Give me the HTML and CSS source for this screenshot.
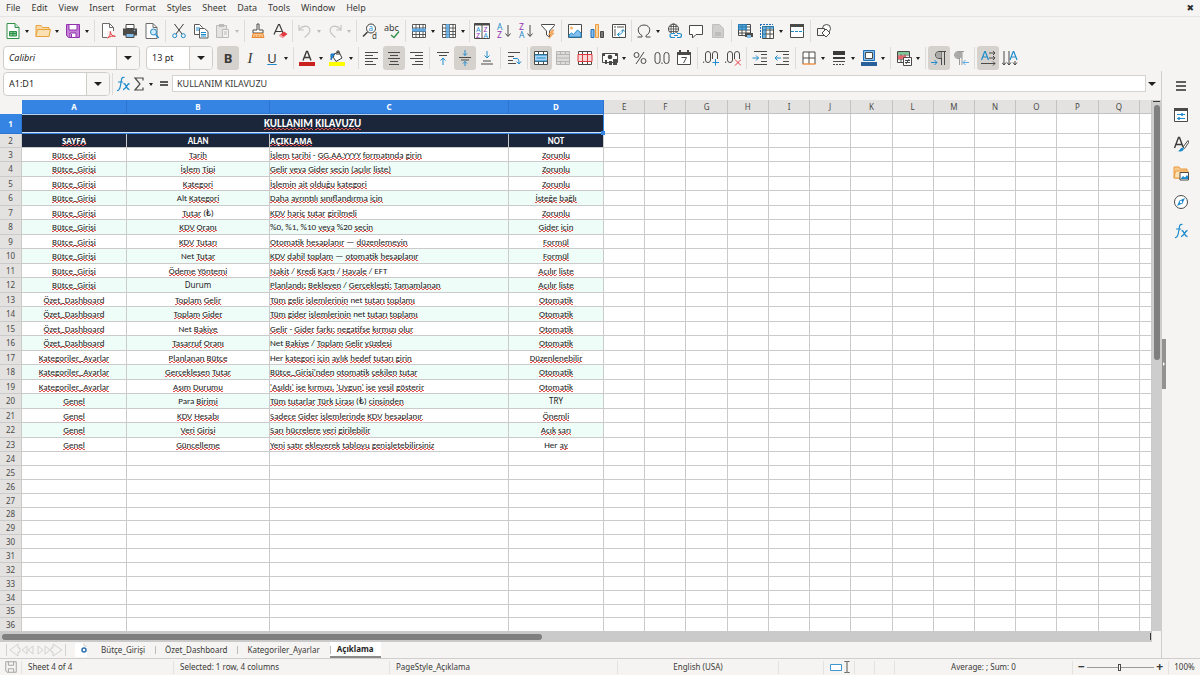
FILE: index.html
```html
<!DOCTYPE html>
<html lang="tr">
<head>
<meta charset="utf-8">
<title>Açıklama</title>
<link rel="stylesheet" href="styles.css">
</head>
<body>
<svg class="sprite" aria-hidden="true">
  <symbol id="new" viewBox="0 0 16 16"><path d="M2 .5h8l4 4v11H2z" fill="#fff" stroke="#309048"/><path d="M10 .5v4h4" fill="#c5e6cf" stroke="#309048"/><path d="M4.500 8.500h7v4.500h-7z" fill="#7dc795" stroke="#309048"/><path d="M8 8v5M4 10.500h8" stroke="#309048"/></symbol>
  <symbol id="open" viewBox="0 0 16 16"><path d="M1 13.500V2.500h5l1.500 2H14v9z" fill="#f8d9a8" stroke="#e8a33d"/><path d="M1 13.500l1.500-7h13l-1.500 7z" fill="#fbe0b4" stroke="#e8a33d"/></symbol>
  <symbol id="save" viewBox="0 0 16 16"><path d="M1.500 1.500h13v13h-11l-2-2z" fill="#c581d6" stroke="#9332b0"/><path d="M4 1.500h8v5.500H4z" fill="#fff" stroke="#9332b0"/><path d="M5 10h6v4.500H5z" fill="#fff" stroke="#9332b0"/><path d="M6.500 11v3" stroke="#9332b0"/></symbol>
  <symbol id="pdf" viewBox="0 0 16 16"><path d="M2.500.5h7l4 4v10h-11z" fill="#fff" stroke="#6b6b69"/><path d="M9.500.5v4h4" fill="none" stroke="#6b6b69"/><path d="M7 8h8v8H7z" fill="#f5f4f2"/><path d="M7.500 15c2.300-1.500 3-3.500 2.800-6.500 .5 3.500 2 4.500 5 4.800-2.500-.5-5 0-7.800 1.700z" fill="none" stroke="#e33b3f"/></symbol>
  <symbol id="print" viewBox="0 0 16 16"><path d="M4 1.500h8v4H4z" fill="#fff" stroke="#4a4a48"/><path d="M1 5.500h14v7H1z" fill="#4a4a48"/><path d="M4 10.500h8v4H4z" fill="#83beec" stroke="#4a4a48"/><circle cx="12.500" cy="7.500" r=".8" fill="#83beec"/></symbol>
  <symbol id="preview" viewBox="0 0 16 16"><path d="M2 .5h7l4 4v11H2z" fill="#fff" stroke="#6b6b69"/><path d="M9 .5v4h4" fill="none" stroke="#6b6b69"/><circle cx="9.500" cy="9" r="3" fill="#d5eafa" stroke="#1e8bcd"/><path d="M11.700 11.500l3 3.500" stroke="#1e8bcd" stroke-width="1.300"/></symbol>
  <symbol id="cut" viewBox="0 0 16 16"><path d="M3.500 1l7.500 10M12.500 1L5 11" fill="none" stroke="#3a3a38"/><circle cx="3.700" cy="12.700" r="2" fill="none" stroke="#1e8bcd"/><circle cx="12.300" cy="12.700" r="2" fill="none" stroke="#1e8bcd"/></symbol>
  <symbol id="copy" viewBox="0 0 16 16"><path d="M1.500 1.500h5l3 3v7h-8z" fill="#fff" stroke="#5a5a58"/><path d="M6.500 5.500h5l3.500 3v6.500H6.500z" fill="#fff" stroke="#5a5a58"/><path d="M3 5h4M3 7h3M8 9.500h5M8 11.500h5M8 13h5" stroke="#1e8bcd"/></symbol>
  <symbol id="paste" viewBox="0 0 16 16"><path d="M1.500 2.500h10v12h-10z" fill="#e4e3e1" stroke="#bcbbb9"/><path d="M4 1h5v3H4z" fill="#bcbbb9"/><path d="M7.500 6.500h6v8h-6z" fill="#f2f1ef" stroke="#bcbbb9"/><path d="M9 9h3M9 11h3" stroke="#bcbbb9"/></symbol>
  <symbol id="brush" viewBox="0 0 16 16"><path d="M7 1h2v6h4v3H3V7h4z" fill="#fff" stroke="#4a4a48"/><path d="M3 10.500h10l1 4H2z" fill="#f8c98d" stroke="#ed8733"/><path d="M5 14v-2M8 14v-2M11 14v-2" stroke="#ed8733"/></symbol>
  <symbol id="clear" viewBox="0 0 16 16"><path d="M2 11.500L6.500 1.500h1L11 10M3.500 8.500h6" fill="none" stroke="#3a3a38" stroke-width="1.200"/><path d="M7 12.500l5-4 3.500 2.500-5 4z" fill="#e33b3f"/><path d="M7 12.500l1.500-1 3.500 2.500-1.500 1z" fill="#f9a6a8"/></symbol>
  <symbol id="undo" viewBox="0 0 16 16"><path d="M2 2v5h5M2.500 6.500c3-4 8.500-4.500 10-1 1.500 3.500-1.500 6-5 9" fill="none" stroke="#c4c3c1" stroke-width="1.200"/></symbol>
  <symbol id="redo" viewBox="0 0 16 16"><path d="M14 2v5H9M13.500 6.500c-3-4-8.500-4.500-10-1-1.500 3.500 1.500 6 5 9" fill="none" stroke="#c4c3c1" stroke-width="1.200"/></symbol>
  <symbol id="find" viewBox="0 0 16 16"><circle cx="9" cy="5.500" r="4.500" fill="#fff" stroke="#3a3a38"/><path d="M5.500 9L1 13.500" stroke="#3a3a38" stroke-width="1.400"/><text x="6.500" y="8" font-size="8" fill="#1e8bcd">a</text><text x="10" y="16" font-size="8" fill="#3a3a38">d</text></symbol>
  <symbol id="spell" viewBox="0 0 16 16"><text x="0" y="8" font-size="9" fill="#3a3a38">abc</text><path d="M7 12l3 2.500 5-6" fill="none" stroke="#309048" stroke-width="1.300"/></symbol>
  <symbol id="row" viewBox="0 0 16 16"><path d="M1.500 1.500h13v13h-13z" fill="#fff"/><path d="M1.500 1.500h13v13h-13zM5 1v14M8.500 1v14M12 1v14M1 5h14M1 8.500h14M1 11.500h14" fill="none" stroke="#4a4a48" stroke-width=".9"/><path d="M1 5.500h14v3H1z" fill="#5eaae6"/></symbol>
  <symbol id="col" viewBox="0 0 16 16"><path d="M1.500 1.500h13v13h-13zM5 1v14M8.500 1v14M12 1v14M1 5h14M1 8.500h14M1 11.500h14" fill="#fff" stroke="#4a4a48" stroke-width=".9"/><path d="M5 1h3.500v14H5z" fill="#5eaae6" opacity=".85"/></symbol>
  <symbol id="sort" viewBox="0 0 16 16"><path d="M.5.500h15v15H.5zM8 1v14" fill="#fff" stroke="#4a4a48"/><path d="M.5.500h15v2H.5z" fill="#4a4a48"/><g font-size="7"><text x="2" y="9" fill="#1e8bcd">A</text><text x="2" y="15" fill="#9332b0">Z</text><text x="9.500" y="9" fill="#9332b0">Z</text><text x="9.500" y="15" fill="#1e8bcd">A</text></g></symbol>
  <symbol id="asc" viewBox="0 0 16 16"><g font-size="8.500"><text x="1" y="7" fill="#1e8bcd">A</text><text x="1" y="15" fill="#9332b0">Z</text></g><path d="M12 2v11M9.500 10.500l2.500 3 2.500-3" fill="none" stroke="#4a4a48"/></symbol>
  <symbol id="desc" viewBox="0 0 16 16"><g font-size="8.500"><text x="1" y="7" fill="#9332b0">Z</text><text x="1" y="15" fill="#1e8bcd">A</text></g><path d="M12 2v11M9.500 10.500l2.500 3 2.500-3" fill="none" stroke="#4a4a48"/></symbol>
  <symbol id="filter" viewBox="0 0 16 16"><path d="M1.500 1.500h13v1L9.500 8v6l-3-2V8l-5-5.500z" fill="#fff" stroke="#4a4a48"/><path d="M12 7l-3.500 4.500h2.500L9 15.500l5-5.500h-2.500L14 7z" fill="#f8b66b" stroke="#ed8733" stroke-width=".6"/></symbol>
  <symbol id="image" viewBox="0 0 16 16"><path d="M1.500 1.500h13v13h-13z" fill="#fff" stroke="#4a4a48"/><circle cx="4.500" cy="5" r="1.500" fill="#f8b66b"/><path d="M2 14v-2l2.500-2 2 1.500L10.500 7l3.500 3v4z" fill="#83beec" stroke="#1e8bcd"/></symbol>
  <symbol id="chart" viewBox="0 0 16 16"><path d="M2 6.500h3v8H2z" fill="#83beec" stroke="#1e6fb8"/><path d="M6.500 1.500h3v13h-3z" fill="#fbd5a0" stroke="#ed9a3d"/><path d="M11.500 8.500h3v6h-3z" fill="#7a7a78" stroke="#4a4a48"/></symbol>
  <symbol id="pivot" viewBox="0 0 16 16"><path d="M1.500 1.500h13v13h-13z" fill="#fff" stroke="#4a4a48"/><path d="M3 3h2v2H3zM6 3h7v2H6zM3 6h2v7H3z" fill="#a9a9a7"/><path d="M6.500 11.500c4 0 5-1.500 5.500-4.500M10 8.500l2-2 1.500 2M8.500 9.500l-2 2 2 2" fill="none" stroke="#1e8bcd"/></symbol>
  <symbol id="omega" viewBox="0 0 16 16"><path d="M1.500 14H6v-1.500C.5 10 1 2 8 2s7.500 8 2 10.500V14h4.500" fill="none" stroke="#4a4a48"/></symbol>
  <symbol id="link" viewBox="0 0 16 16"><circle cx="7.500" cy="6" r="5" fill="#fff" stroke="#4a4a48"/><path d="M2.500 6h10M7.500 1v10M3.500 3.500h8M3.500 8.500h8" stroke="#4a4a48" stroke-width=".8"/><ellipse cx="7.500" cy="6" rx="2.500" ry="5" fill="none" stroke="#4a4a48" stroke-width=".8"/><path d="M4 10h12v6H4z" fill="#f5f4f2"/><path d="M9 10.500H6a2 2 0 0 0 0 4h3M11 10.500h2.500a2 2 0 0 1 0 4H11M8 12.500h4" fill="none" stroke="#1e8bcd" stroke-width="1.200"/></symbol>
  <symbol id="comment" viewBox="0 0 16 16"><path d="M1.500 2.500h13v9H8l-3.500 3.500v-3.500h-3z" fill="#fff" stroke="#4a4a48"/></symbol>
  <symbol id="headfoot" viewBox="0 0 16 16"><path d="M2.500 1.500h7l4 4v9h-11z" fill="#d0cfcd" stroke="#c0bfbd"/><path d="M5 10h6M5 12h6" stroke="#aaa"/></symbol>
  <symbol id="area" viewBox="0 0 16 16"><path d="M1.500 1.500h12v11h-12zM5 1v11M9 1v11M1 4h13M1 7h13M1 10h13" fill="#fff" stroke="#4a4a48"/><path d="M1 1h9v6H1z" fill="#1e8bcd" opacity=".75"/><path d="M8 10h8v4H8z" fill="#4a4a48"/><path d="M10 12h4v3h-4z" fill="#83beec"/></symbol>
  <symbol id="freeze" viewBox="0 0 16 16"><path d="M3.500 3.500h11v12h-11zM7 3v12M11 3v12M3 7h12M3 11h12" fill="#fff" stroke="#4a4a48"/><path d="M1.500 1v14M1 1.500h13" stroke="#1e6fb8" stroke-dasharray="2 1"/><path d="M3 3h4v12H3zM7 3h8v3H7z" fill="#1e8bcd" opacity=".65"/></symbol>
  <symbol id="split" viewBox="0 0 16 16"><path d="M1.500 2.500h13v12h-13z" fill="#fff" stroke="#4a4a48"/><path d="M1 1h14v3H1z" fill="#4a4a48"/><path d="M2 8.500h13" stroke="#1e8bcd" stroke-dasharray="3 1"/></symbol>
  <symbol id="shapes" viewBox="0 0 16 16"><circle cx="10.500" cy="5.500" r="4" fill="#fff" stroke="#4a4a48"/><path d="M1.500 5.500h7v7h-7z" fill="#f5f4f2" stroke="#4a4a48"/><path d="M10 6l4 4-4 4-4-4z" fill="#fff" stroke="#4a4a48"/></symbol>
  <symbol id="fontcol" viewBox="0 0 16 16"><path d="M4 10.500L7.500 1.500h1L12 10.500M5.500 7.500h5" fill="none" stroke="#3a3a38" stroke-width="1.400"/><path d="M0 12h16v4H0z" fill="#c9211e"/></symbol>
  <symbol id="fill" viewBox="0 0 16 16"><path d="M5 4l5-2 3 6-6 3.500-2.500-4z" fill="#fff" stroke="#3a3a38"/><path d="M8 5V1h2v4" fill="none" stroke="#3a3a38"/><path d="M2 10V4h4l-2 2z" fill="#1e8bcd" stroke="#1e6fb8"/><path d="M0 12h16v4H0z" fill="#ffff00"/></symbol>
  <symbol id="left" viewBox="0 0 16 16"><path d="M1 2.500h13M1 5.500h8M1 8.500h13M1 11.500h8M1 14.500h11" stroke="#4a4a48"/></symbol>
  <symbol id="center" viewBox="0 0 16 16"><path d="M2 2.500h12M4 5.500h8M2 8.500h12M4 11.500h8M3 14.500h10" stroke="#4a4a48"/></symbol>
  <symbol id="right" viewBox="0 0 16 16"><path d="M2 2.500h13M7 5.500h8M2 8.500h13M7 11.500h8M4 14.500h11" stroke="#4a4a48"/></symbol>
  <symbol id="top" viewBox="0 0 16 16"><path d="M2 2.500h12M4 5.500h8" stroke="#4a4a48"/><path d="M8 15V8M5.500 10.500L8 8l2.500 2.500" fill="none" stroke="#1e8bcd"/></symbol>
  <symbol id="middle" viewBox="0 0 16 16"><path d="M2 7.500h12M4 10h8" stroke="#4a4a48"/><path d="M8 0v5.500M6 3.500l2 2 2-2M8 16v-4.500M6 13.500l2-2 2 2" fill="none" stroke="#1e8bcd"/></symbol>
  <symbol id="bottom" viewBox="0 0 16 16"><path d="M4 11h8M2 14h12" stroke="#4a4a48"/><path d="M8 1v7M5.500 5.500L8 8l2.500-2.500" fill="none" stroke="#1e8bcd"/></symbol>
  <symbol id="wrap" viewBox="0 0 16 16"><path d="M2 2.500h12M2 6.500h6M2 10.500h5M2 13.500h8" stroke="#4a4a48"/><path d="M7 8.500h4.500c1 0 1.500 3 1.500 5M10.500 11.500l2.500 2.500 2-2.500" fill="none" stroke="#1e8bcd"/></symbol>
  <symbol id="mergec" viewBox="0 0 16 16"><path d="M1.500 1.500h13v13h-13zM5.500 1v3M10.500 1v3M5.500 12v3M10.500 12v3M1 4.500h14M1 11.500h14" fill="#fff" stroke="#4a4a48"/><path d="M2 5h12v6H2z" fill="#a8d4f5"/><path d="M2 5h12M2 11h12M3.500 8h9" stroke="#1e8bcd"/></symbol>
  <symbol id="merge" viewBox="0 0 16 16"><path d="M1.500 1.500h13v13h-13zM5.500 1v3M10.500 1v3M5.500 12v3M10.500 12v3M1 4.500h14M1 8h14M1 11.500h14" fill="#dddcda" stroke="#b5b4b2"/></symbol>
  <symbol id="unmerge" viewBox="0 0 16 16"><path d="M1.500 1.500h13v13h-13zM5.500 1v3M10.500 1v3M5.500 12v3M10.500 12v3" fill="#fff" stroke="#4a4a48"/><path d="M1 4.500h14v7H1zM5.500 5v6M10.500 5v6" fill="#fbd7d8" stroke="#d9383c"/></symbol>
  <symbol id="money" viewBox="0 0 16 16"><path d="M.5 3.500h15v9H.5z" fill="#fff" stroke="#4a4a48"/><circle cx="8" cy="7" r="2.300" fill="#4a4a48"/><path d="M1 4h2v2H1zM13 4h2v2h-2zM3 10h2v4H3zM7 11h3v4H7zM11 9h4v6h-4z" fill="#4a4a48"/></symbol>
  <symbol id="percent" viewBox="0 0 16 16"><circle cx="4.500" cy="5" r="2.500" fill="none" stroke="#4a4a48"/><circle cx="11.500" cy="11" r="2.500" fill="none" stroke="#4a4a48"/><path d="M12 2L4 14" stroke="#4a4a48"/></symbol>
  <symbol id="number" viewBox="0 0 16 16"><rect x="1" y="2.500" width="5" height="11" rx="2.500" fill="none" stroke="#4a4a48"/><rect x="10" y="2.500" width="5" height="11" rx="2.500" fill="none" stroke="#4a4a48"/><path d="M8 12.500v1.500" stroke="#4a4a48"/></symbol>
  <symbol id="date" viewBox="0 0 16 16"><path d="M1.500 2.500h13v12h-13z" fill="#fff" stroke="#4a4a48"/><path d="M1 2h14v3H1zM3 0h2v3H3zM11 0h2v3h-2z" fill="#4a4a48"/><path d="M5.500 7.500h5L7.500 13" fill="none" stroke="#4a4a48"/></symbol>
  <symbol id="decadd" viewBox="0 0 16 16"><rect x="2.500" y="1.500" width="5" height="11" rx="2.500" fill="none" stroke="#4a4a48"/><rect x="9.500" y="1.500" width="5" height="11" rx="2.500" fill="none" stroke="#4a4a48"/><path d="M.7 11.500V13" stroke="#4a4a48"/><path d="M9 9h7v7H9z" fill="#f5f4f2"/><path d="M12.500 9v6.500M9.500 12.500H16" stroke="#1e8bcd"/></symbol>
  <symbol id="decdel" viewBox="0 0 16 16"><rect x="2.500" y="1.500" width="5" height="11" rx="2.500" fill="none" stroke="#4a4a48"/><rect x="9.500" y="1.500" width="5" height="11" rx="2.500" fill="none" stroke="#4a4a48"/><path d="M.7 11.500V13" stroke="#4a4a48"/><path d="M9 9h7v7H9z" fill="#f5f4f2"/><path d="M10 9.500l6 6M16 9.500l-6 6" stroke="#e33b3f"/></symbol>
  <symbol id="indent" viewBox="0 0 16 16"><path d="M2 1.500h13M9 4.500h6M9 8h6M9 11.500h6M2 14.500h13" stroke="#4a4a48"/><path d="M.5 8h6M4 5.500L6.500 8 4 10.500" fill="none" stroke="#1e8bcd"/></symbol>
  <symbol id="outdent" viewBox="0 0 16 16"><path d="M2 1.500h13M9 4.500h6M9 8h6M9 11.500h6M2 14.500h13" stroke="#4a4a48"/><path d="M1 8h6M3.500 5.500L1 8l2.500 2.500" fill="none" stroke="#1e8bcd"/></symbol>
  <symbol id="borders" viewBox="0 0 16 16"><path d="M2 14V2h12v12M8 2v12M2 8h12" fill="#fff" stroke="#4a4a48"/><path d="M1.500 14h13" stroke="#ed8733" stroke-width="1.300"/></symbol>
  <symbol id="bstyle" viewBox="0 0 16 16"><path d="M2 1h12v4H2zM2 7h12v2H2z" fill="#3a3a38"/><path d="M2 11.500h12" stroke="#4a4a48"/><path d="M2 14.500h12" stroke="#4a4a48" stroke-dasharray="2 1"/></symbol>
  <symbol id="bcolor" viewBox="0 0 16 16"><path d="M2.500.5h11v10h-11z" fill="#83beec" stroke="#1e6fb8"/><path d="M4.500 2.500h7v6h-7z" fill="#fff" stroke="#4a4a48"/><path d="M0 12h16v4H0z" fill="#2a6099"/></symbol>
  <symbol id="cond" viewBox="0 0 16 16"><path d="M1.500 1.500h12v11h-12zM5 1v11M9 1v11M1 5h13M1 9h13" fill="#fff" stroke="#4a4a48"/><path d="M2 2h11v2.500H2z" fill="#7dc795"/><path d="M2 5.500h8V9H2z" fill="#e8686b"/><path d="M7.500 7.500h8v8h-8z" fill="#fff" stroke="#4a4a48"/><path d="M9 10.500h5M9 12.500h5M10 14l3-5" stroke="#4a4a48"/></symbol>
  <symbol id="ltr" viewBox="0 0 16 16"><path d="M15 1.500H8a3.500 3.500 0 0 0 0 7h2.500M10.500 1.500V15M13.500 1.500V15" fill="none" stroke="#4a4a48"/><path d="M8 2h2.500v6H8a3 3 0 0 1 0-6z" fill="#a9a9a7"/><path d="M0 12.500h6M3.500 10L6 12.500 3.500 15" fill="none" stroke="#1e8bcd"/></symbol>
  <symbol id="rtl" viewBox="0 0 16 16"><path d="M11 1.500H5a3.500 3.500 0 0 0 0 7h1.500M6.500 1.500V15M9 1.500V15" fill="none" stroke="#9a9a98"/><path d="M5 2h4v6H5a3 3 0 0 1 0-6z" fill="#a9a9a7"/><path d="M16 12.500h-6M12.500 10L10 12.500l2.500 2.500" fill="none" stroke="#5eaae6"/></symbol>
  <symbol id="horiz" viewBox="0 0 16 16"><path d="M1.500 10L4.700 1.500h.6L8.500 10M2.500 7h5" fill="none" stroke="#1e8bcd" stroke-width="1.200"/><path d="M9 3h6M13 1l2 2-2 2M9 8h6M13 6l2 2-2 2M1 13.500h14M13 11.500l2 2-2 2" fill="none" stroke="#4a4a48"/></symbol>
  <symbol id="vert" viewBox="0 0 16 16"><path d="M8 10l3.200-8.500h.6L15 10M9 7h5" fill="none" stroke="#1e8bcd" stroke-width="1.200"/><path d="M2 1v14M0 12.500L2 15l2-2.500M7 1v14M5 12.500L7 15l2-2.500M13 11v4M11 12.500l2 2.500 2-2.500" fill="none" stroke="#4a4a48"/></symbol>
  <symbol id="fx" viewBox="0 0 16 16"><path d="M9.500 1.500c-3-1-3 2-3.500 5s-1 8.500-4 8M3 6h5" fill="none" stroke="#1e8bcd" stroke-width="1.200"/><path d="M8.500 7.500c3-.5 2.500 6.500 6 6M14.500 7.500c-2.500 0-4 6.500-6.500 6" fill="none" stroke="#1e8bcd" stroke-width="1.300"/></symbol>
  <symbol id="sigma" viewBox="0 0 16 16"><path d="M12 4.500v-2.500H4L9 8 4 14h8v-2.500" fill="none" stroke="#4a4a48" stroke-width="1.200"/></symbol>
  <symbol id="props" viewBox="0 0 16 16"><path d="M1.500 1.500h13v13h-13z" fill="#fff" stroke="#4a4a48"/><path d="M1 1h14v3H1z" fill="#4a4a48"/><path d="M4 7.500h8M4 11.500h8" stroke="#1e8bcd"/><path d="M9 6v3M6 10v3" stroke="#1e8bcd" stroke-width="1.500"/></symbol>
  <symbol id="styles" viewBox="0 0 16 16"><path d="M1.500 12L5.500 1.500h1L10 11M3 8.500h6" fill="none" stroke="#3a3a38" stroke-width="1.400"/><path d="M15 4.500L10 11l1.500 1.500L16 6z" fill="#fff" stroke="#4a4a48"/><path d="M4 15c3 .5 3-3.500 6-3.500 2 1.500 0 4-3 4z" fill="#1e8bcd"/></symbol>
  <symbol id="gallery" viewBox="0 0 16 16"><path d="M1 13V2h5l1.500 2H14v9z" fill="#f8c98d" stroke="#ed9a3d"/><path d="M1 13l1.500-7H15v7z" fill="#fbe0b4" stroke="#ed9a3d"/><path d="M7 7.500h8.500v7.500H7z" fill="#fff" stroke="#4a4a48"/><path d="M7.500 14l2.500-3 2 1.500 2-2.500 1 1.500V14z" fill="#1e8bcd"/></symbol>
  <symbol id="nav" viewBox="0 0 16 16"><circle cx="8" cy="8" r="6.500" fill="#fff" stroke="#4a4a48"/><path d="M12 4L9.500 9.500 4 12l2.500-5.500z" fill="#1e8bcd"/><circle cx="8" cy="8" r="1.200" fill="#fff"/></symbol>
  <symbol id="cursor" viewBox="0 0 16 16"><path d="M5 1.500h2.500l.5.500.5-.5H11M5 14.500h2.500L8 14l.5.500H11M8 2v12" fill="none" stroke="#3a3a38"/></symbol>
</svg>

<header>
  <nav class="menubar" aria-label="Menu">
    <button>File</button><button>Edit</button><button>View</button><button>Insert</button><button>Format</button><button>Styles</button><button>Sheet</button><button>Data</button><button>Tools</button><button>Window</button><button>Help</button>
    <button class="close" aria-label="Close document">✖</button>
  </nav>
  <div class="toolbar standard" role="toolbar" aria-label="Standard">
    <button class="tb drop" aria-label="New"><svg><use href="#new"/></svg></button>
    <button class="tb drop" aria-label="Open"><svg><use href="#open"/></svg></button>
    <button class="tb drop" aria-label="Save"><svg><use href="#save"/></svg></button>
    <i class="sep"></i>
    <button class="tb" aria-label="Export as PDF"><svg><use href="#pdf"/></svg></button>
    <button class="tb" aria-label="Print"><svg><use href="#print"/></svg></button>
    <button class="tb" aria-label="Print preview"><svg><use href="#preview"/></svg></button>
    <i class="sep"></i>
    <button class="tb" aria-label="Cut"><svg><use href="#cut"/></svg></button>
    <button class="tb" aria-label="Copy"><svg><use href="#copy"/></svg></button>
    <button class="tb drop off" aria-label="Paste" disabled><svg><use href="#paste"/></svg></button>
    <i class="sep"></i>
    <button class="tb" aria-label="Clone formatting"><svg><use href="#brush"/></svg></button>
    <button class="tb" aria-label="Clear formatting"><svg><use href="#clear"/></svg></button>
    <i class="sep tight"></i>
    <button class="tb drop off" aria-label="Undo" disabled><svg><use href="#undo"/></svg></button>
    <button class="tb drop off" aria-label="Redo" disabled><svg><use href="#redo"/></svg></button>
    <i class="sep"></i>
    <button class="tb" aria-label="Find and replace"><svg><use href="#find"/></svg></button>
    <button class="tb" aria-label="Spelling"><svg><use href="#spell"/></svg></button>
    <i class="sep"></i>
    <button class="tb drop" aria-label="Row"><svg><use href="#row"/></svg></button>
    <button class="tb drop" aria-label="Column"><svg><use href="#col"/></svg></button>
    <i class="sep tight"></i>
    <button class="tb" aria-label="Sort"><svg><use href="#sort"/></svg></button>
    <button class="tb" aria-label="Sort ascending"><svg><use href="#asc"/></svg></button>
    <button class="tb" aria-label="Sort descending"><svg><use href="#desc"/></svg></button>
    <button class="tb" aria-label="AutoFilter"><svg><use href="#filter"/></svg></button>
    <i class="sep"></i>
    <button class="tb" aria-label="Image"><svg><use href="#image"/></svg></button>
    <button class="tb" aria-label="Chart"><svg><use href="#chart"/></svg></button>
    <button class="tb" aria-label="Pivot table"><svg><use href="#pivot"/></svg></button>
    <i class="sep tight"></i>
    <button class="tb drop" aria-label="Special character"><svg><use href="#omega"/></svg></button>
    <button class="tb" aria-label="Hyperlink"><svg><use href="#link"/></svg></button>
    <button class="tb" aria-label="Comment"><svg><use href="#comment"/></svg></button>
    <button class="tb" aria-label="Headers and footers" disabled><svg><use href="#headfoot"/></svg></button>
    <i class="sep"></i>
    <button class="tb" aria-label="Print area"><svg><use href="#area"/></svg></button>
    <button class="tb drop" aria-label="Freeze"><svg><use href="#freeze"/></svg></button>
    <button class="tb" aria-label="Split window"><svg><use href="#split"/></svg></button>
    <i class="sep"></i>
    <button class="tb" aria-label="Draw functions"><svg><use href="#shapes"/></svg></button>
  </div>
  <div class="toolbar formatting" role="toolbar" aria-label="Formatting">
    <div class="combo font"><input aria-label="Font name" value="Calibri"><button aria-label="Font list"></button></div>
    <div class="combo size"><input aria-label="Font size" value="13 pt"><button aria-label="Size list"></button></div>
    <button class="tb on letter" aria-label="Bold"><b>B</b></button>
    <button class="tb letter serif" aria-label="Italic"><em>I</em></button>
    <button class="tb drop letter" aria-label="Underline"><u>U</u></button>
    <i class="sep"></i>
    <button class="tb drop" aria-label="Font color"><svg><use href="#fontcol"/></svg></button>
    <button class="tb drop" aria-label="Background color"><svg><use href="#fill"/></svg></button>
    <i class="sep"></i>
    <button class="tb" aria-label="Align left"><svg><use href="#left"/></svg></button>
    <button class="tb on" aria-label="Align center"><svg><use href="#center"/></svg></button>
    <button class="tb" aria-label="Align right"><svg><use href="#right"/></svg></button>
    <i class="sep"></i>
    <button class="tb" aria-label="Align top"><svg><use href="#top"/></svg></button>
    <button class="tb on" aria-label="Center vertically"><svg><use href="#middle"/></svg></button>
    <button class="tb" aria-label="Align bottom"><svg><use href="#bottom"/></svg></button>
    <i class="sep"></i>
    <button class="tb" aria-label="Wrap text"><svg><use href="#wrap"/></svg></button>
    <i class="sep"></i>
    <button class="tb on" aria-label="Merge and center"><svg><use href="#mergec"/></svg></button>
    <button class="tb" aria-label="Merge cells" disabled><svg><use href="#merge"/></svg></button>
    <button class="tb" aria-label="Unmerge cells"><svg><use href="#unmerge"/></svg></button>
    <i class="sep tight"></i>
    <button class="tb drop" aria-label="Currency"><svg><use href="#money"/></svg></button>
    <button class="tb" aria-label="Percent"><svg><use href="#percent"/></svg></button>
    <button class="tb" aria-label="Number"><svg><use href="#number"/></svg></button>
    <button class="tb" aria-label="Date"><svg><use href="#date"/></svg></button>
    <i class="sep"></i>
    <button class="tb" aria-label="Add decimal place"><svg><use href="#decadd"/></svg></button>
    <button class="tb" aria-label="Delete decimal place"><svg><use href="#decdel"/></svg></button>
    <i class="sep"></i>
    <button class="tb" aria-label="Increase indent"><svg><use href="#indent"/></svg></button>
    <button class="tb" aria-label="Decrease indent"><svg><use href="#outdent"/></svg></button>
    <i class="sep"></i>
    <button class="tb drop" aria-label="Borders"><svg><use href="#borders"/></svg></button>
    <button class="tb drop" aria-label="Border style"><svg><use href="#bstyle"/></svg></button>
    <button class="tb drop" aria-label="Border color"><svg><use href="#bcolor"/></svg></button>
    <i class="sep"></i>
    <button class="tb drop" aria-label="Conditional formatting"><svg><use href="#cond"/></svg></button>
    <i class="sep"></i>
    <button class="tb on" aria-label="Left to right"><svg><use href="#ltr"/></svg></button>
    <button class="tb" aria-label="Right to left"><svg><use href="#rtl"/></svg></button>
    <i class="sep"></i>
    <button class="tb on" aria-label="Horizontal text"><svg><use href="#horiz"/></svg></button>
    <button class="tb" aria-label="Vertical text"><svg><use href="#vert"/></svg></button>
  </div>
</header>

<div class="workspace">
  <main>
    <div class="formula">
      <div class="combo name"><input aria-label="Name box" value="A1:D1"><button aria-label="Named ranges"></button></div>
      <i class="sep"></i>
      <button class="fb" aria-label="Function wizard"><svg><use href="#fx"/></svg></button>
      <button class="fb drop" aria-label="Select function"><svg><use href="#sigma"/></svg></button>
      <button class="fb equals" aria-label="Formula"></button>
      <input class="line" aria-label="Input line" value="KULLANIM KILAVUZU">
      <button class="expand" aria-label="Expand formula bar"></button>
    </div>
    <div class="gridarea">
      <div class="sheet">
        <table>
          <colgroup><col class="c-row"><col class="c-a"><col class="c-b"><col class="c-c"><col class="c-d"><col span="13"><col class="c-end"></colgroup>
          <thead id="heads"></thead>
          <tbody id="rows"></tbody>
        </table>
      </div>
      <div class="vscroll"><span class="grip"></span><span class="thumb"></span></div>
    </div>
    <div class="hscroll"><span class="thumb"></span><span class="grip"></span></div>
    <div class="tabs">
      <svg class="steps" viewBox="0 0 62 14" fill="none" stroke="#d3d2d0"><path d="M1.500 1v12M13 1L5 7l8 6V9h2V5h-2zM22 3l-5 4 5 4zM28 3l-5 4 5 4zM33 3l5 4-5 4zM40 3l5 4-5 4zM48 1l9 6-9 6V9h-2V5h2zM60.500 1v12"/></svg>
      <button class="add" aria-label="Add sheet"><svg viewBox="0 0 14 14"><path d="M1 0h9l3 3v11H1z" fill="#fff"/><path d="M10 0v3h3" fill="none" stroke="#d0d0ce"/><circle cx="10" cy="7" r="2" fill="#fff" stroke="#2a6fb0" stroke-width="1.500"/></svg></button>
      <button class="tab">Bütçe_Girişi</button>
      <button class="tab">Özet_Dashboard</button>
      <button class="tab">Kategoriler_Ayarlar</button>
      <button class="tab active">Açıklama</button>
    </div>
  </main>
  <aside>
    <span class="handle"></span>
    <button aria-label="Sidebar settings"><svg viewBox="0 0 16 16"><path d="M3 4h10M3 8h10M3 12h10" stroke="#2e2e2c" stroke-width="1.500"/></svg></button>
    <button aria-label="Properties"><svg><use href="#props"/></svg></button>
    <button aria-label="Styles"><svg><use href="#styles"/></svg></button>
    <button aria-label="Gallery"><svg><use href="#gallery"/></svg></button>
    <button aria-label="Navigator"><svg><use href="#nav"/></svg></button>
    <button aria-label="Functions"><svg><use href="#fx"/></svg></button>
  </aside>
</div>

<footer>
  <span class="mid"><svg class="disk" viewBox="0 0 16 16"><path d="M2 2h12v12H3.500L2 12.500zM5 2v4h6V2M5 14v-4h6v4" fill="none" stroke="#9a9a98"/></svg></span>
  <span>Sheet 4 of 4</span>
  <span>Selected: 1 row, 4 columns</span>
  <span>PageStyle_Açıklama</span>
  <span class="mid">English (USA)</span>
  <span></span>
  <span class="mode"><svg viewBox="0 0 12 7"><path d="M.5.500h11v6H.5z" fill="#fff" stroke="#3f97cf"/></svg><svg class="ibeam" viewBox="5 1 6 14"><use href="#cursor" width="16" height="16"/></svg></span>
  <span></span>
  <span></span>
  <span class="mid">Average: ; Sum: 0</span>
  <span class="zoom"><button aria-label="Zoom out">−</button><input type="range" aria-label="Zoom" value="49"><button aria-label="Zoom in">+</button></span>
  <span class="mid">100%</span>
</footer>
<script src="app.js"></script>
</body>
</html>
```

FILE: styles.css
```css
* { box-sizing: border-box; }
:root {
  --chrome: #f5f4f2;
  --line: #dddcda;
  --grid: #cbcbcb;
  --accent: #3584e4;
  --ink: #3a3a38;
}
body {
  margin: 0;
  height: 100vh;
  display: flex;
  flex-direction: column;
  overflow: hidden;
  background: var(--chrome);
  color: var(--ink);
  font: 8px/12px "Noto Sans", sans-serif;
}
button, input { font: inherit; color: inherit; margin: 0; }
button { padding: 0; border: 0; background: none; }
svg { display: block; width: 16px; height: 16px; }
svg text { font-family: "Noto Sans", sans-serif; }
.sprite { display: none; }

.menubar {
  display: flex;
  gap: 11px;
  height: 17px;
  padding: 0 6px;
  border-bottom: 1px solid #e6e5e3;
  font-size: 9px;
}
.menubar .close { margin-left: auto; font: 9px "DejaVu Sans", sans-serif; color: #2e2e2c; }

.toolbar { display: flex; align-items: center; height: 27px; }
.standard { padding-left: 2px; }
.tb {
  display: flex;
  align-items: center;
  flex: none;
  width: 22px;
  height: 24px;
  padding-left: 3px;
  border-radius: 3px;
}
.tb.on { background: #d5d2ce; }
.drop { width: 30px; gap: 1px; }
.drop::after, .expand::after, .combo button::after {
  content: "";
  flex: none;
  border: 3px solid transparent;
  border-top-color: #1f1f1e;
  border-bottom-width: 0;
}
.drop::after { border-width: 3px 2px 0; margin-left: 3px; margin-top: 2px; }
.drop.off::after { border-top-color: #bcbbb9; }
.sep { flex: none; width: 1px; height: 22px; margin: 0 2px; background: var(--line); }
.sep.tight { margin: 0 1px; }
.letter { font-size: 13px; }
.letter b, .letter em, .letter u { width: 16px; text-align: center; }
.letter u { text-decoration-color: #1e8bcd; text-decoration-thickness: 1px; }
.serif { font-family: "Liberation Serif", serif; font-size: 15px; }

.combo {
  display: flex;
  flex: none;
  height: 24px;
  border: 1px solid #cfcdca;
  border-radius: 4px;
  background: #fff;
  overflow: hidden;
  font-size: 9px;
}
.combo input { flex: 1; min-width: 0; padding: 0 5px; border: 0; background: none; color: #1f1f1e; }
.combo button {
  display: flex;
  align-items: center;
  justify-content: center;
  width: 23px;
  border-left: 1px solid #cfcdca;
  background: #f7f6f5;
}
.combo button::after, .expand::after { border-width: 4px 4px 0; }
.font { width: 137px; margin: 0 6px 0 3px; }
.font input { font-style: italic; }
.size { width: 67px; margin-right: 4px; }

.workspace { flex: 1; min-height: 0; display: flex; }
main { flex: 1; min-width: 0; display: flex; flex-direction: column; }
.formula { display: flex; align-items: center; height: 29px; padding: 0 4px 4px 3px; }
.name { width: 107px; }
.fb { display: flex; align-items: center; width: 16px; }
.fb.drop { width: 26px; gap: 0; }
.fb.drop::after { margin-left: 2px; }
.fb.equals { width: 8px; height: 5px; margin: 0 4px 0 3px; border: solid #5a5a58; border-width: 2px 0; }
.line { flex: 1; height: 17px; padding: 0 4px; border: 1px solid #d5d3d0; background: #fff; font-size: 9px; }
.expand { display: flex; justify-content: center; width: 11px; }

.gridarea { flex: 1; min-height: 0; display: flex; }
.sheet { flex: 1; min-width: 0; overflow: hidden; background: #fff; }
table { width: 100%; table-layout: fixed; border-collapse: separate; border-spacing: 0; }
.c-row { width: 22px; }
.c-a { width: 105px; }
.c-b { width: 143px; }
.c-c { width: 239px; }
.c-d { width: 95px; }
.c-end { width: 12px; }
th, td { padding: 0; line-height: 12px; border: solid var(--grid); border-width: 0 1px 1px 0; white-space: nowrap; }
th { background: #e3e2e0; font-weight: 400; color: #4a4a48; }
thead th { height: 14px; border-color: #c4c3c1; }
thead th:first-child { background: var(--chrome); border-color: var(--chrome); }
th.sel { background: var(--accent); border-color: #2b74cf; color: #fff; font-weight: 700; }
tbody tr { height: 14px; }
tbody tr:nth-child(7n) { height: 13px; }
tbody tr.data:nth-child(n) { height: 14px; }
tbody tr.data:nth-child(even) { height: 15px; }
tbody tr.title:nth-child(n) { height: 20px; }
tbody tr.caption:nth-child(n) { height: 14px; }
.data td, .title td, .caption td { font-family: Carlito, Lato, sans-serif; font-size: 9px; text-align: center; color: #222; overflow: hidden; }
.data td:nth-child(4), .caption td:nth-child(4) { text-align: left; }
.data:nth-child(even) .used { background: #effdf9; }
.caption .used { background: #1b263b; color: #fff; font-weight: 700; }
.title .used {
  position: relative;
  overflow: visible;
  background: #1b263b;
  color: #fff;
  font-size: 11px;
  font-weight: 700;
  border-color: var(--accent);
  box-shadow: inset 0 1px #b8d3f2, inset 0 -1px #cfe2f8;
}
.title .used::after {
  content: "";
  position: absolute;
  right: -2px;
  bottom: -2px;
  width: 4px;
  height: 4px;
  background: var(--accent);
}
.data .plain, .caption .plain { font-family: "Noto Sans", sans-serif; font-size: 8px; }
.miss {
  background:
    repeating-linear-gradient(90deg, #e0504c 0 2px, transparent 2px 4px) left bottom / 100% 1px no-repeat,
    repeating-linear-gradient(90deg, transparent 0 2px, #e0504c 2px 4px) left bottom 1px / 100% 1px no-repeat;
}

.vscroll { display: flex; flex-direction: column; align-items: center; gap: 3px; width: 9px; background: #cdcdcd; }
.vscroll .grip { width: 7px; height: 1px; margin-top: 1px; background: #3a3a38; }
.vscroll .thumb { width: 6px; height: 48%; border-radius: 3px; background: #7f7f7f; }
.hscroll { display: flex; align-items: center; justify-content: space-between; height: 11px; margin-right: 9px; padding: 0 1px 0 2px; background: #cacaca; }
.hscroll .thumb { width: 47%; height: 6px; border-radius: 3px; background: #7f7f7f; }
.hscroll .grip { width: 1px; height: 7px; background: #3a3a38; }

.tabs { display: flex; align-items: stretch; height: 16px; padding-left: 5px; }
.steps { width: 62px; height: 14px; margin-top: 1px; }
.add { margin: 0 3px 0 7px; }
.add svg { width: 14px; height: 14px; }
.tab { position: relative; padding: 0 10px 1px; }
.tab + .tab::before { content: ""; position: absolute; left: 0; top: 4px; height: 8px; border-left: 1px solid #bcbbb9; }
.tab.active { padding: 0 7px; background: #fff; border-bottom: 2px solid #8a8a88; font-weight: 700; color: #1f1f1e; }

aside {
  position: relative;
  display: flex;
  flex-direction: column;
  align-items: center;
  gap: 13px;
  width: 39px;
  padding-top: 7px;
  border-left: 1px solid #cfcecc;
}
.handle { position: absolute; left: 0; top: 268px; width: 4px; height: 50px; background: #929292; }
.handle::after { content: ""; position: absolute; left: 1px; top: 23px; border: 2px solid transparent; border-left-color: #fff; border-right-width: 0; }

footer {
  display: grid;
  grid-template-columns: 21px 152fr 216fr 228fr 161fr 45fr 31px 20px 20px 178fr 96px 32px;
  align-items: center;
  height: 17px;
  border-top: 1px solid #cfcecc;
}
footer > span { display: flex; align-items: center; height: 13px; padding-left: 6px; white-space: nowrap; }
footer > span + span { border-left: 1px solid #e3e2e0; }
footer .mid { justify-content: center; padding: 0; }
.disk { width: 14px; height: 14px; }
.mode { gap: 2px; }
.mode svg { width: 12px; height: 7px; }
.mode .ibeam { width: 6px; height: 12px; }
footer .zoom { gap: 2px; padding: 0 5px; justify-content: space-between; }
.zoom button { font: 700 12px/12px "Noto Sans", sans-serif; }
.zoom input { appearance: none; flex: 1; min-width: 0; height: 10px; background: linear-gradient(#9a9a98, #9a9a98) center / 100% 1px no-repeat; }
.zoom input::-webkit-slider-thumb { appearance: none; width: 3px; height: 7px; border: 1px solid #4a4a48; background: #fff; }
```

FILE: app.js
```js
const letters = "ABCDEFGHIJKLMNOPQ".split("");
const known = /^(Durum|ALAN|NOT|TRY|Net|net|Alt|Para|Her|EFT|\(₺\)|[-—/]|%\d+,?)$/;
const data = [
  ["Bütçe_Girişi", "Tarih", "İşlem tarihi - GG.AA.YYYY formatında girin", "Zorunlu"],
  ["Bütçe_Girişi", "İşlem Tipi", "Gelir veya Gider seçin (açılır liste)", "Zorunlu"],
  ["Bütçe_Girişi", "Kategori", "İşlemin ait olduğu kategori", "Zorunlu"],
  ["Bütçe_Girişi", "Alt Kategori", "Daha ayrıntılı sınıflandırma için", "İsteğe bağlı"],
  ["Bütçe_Girişi", "Tutar (₺)", "KDV hariç tutar girilmeli", "Zorunlu"],
  ["Bütçe_Girişi", "KDV Oranı", "%0, %1, %10 veya %20 seçin", "Gider için"],
  ["Bütçe_Girişi", "KDV Tutarı", "Otomatik hesaplanır — düzenlemeyin", "Formül"],
  ["Bütçe_Girişi", "Net Tutar", "KDV dahil toplam — otomatik hesaplanır", "Formül"],
  ["Bütçe_Girişi", "Ödeme Yöntemi", "Nakit / Kredi Kartı / Havale / EFT", "Açılır liste"],
  ["Bütçe_Girişi", "Durum", "Planlandı: Bekleyen / Gerçekleşti: Tamamlanan", "Açılır liste"],
  ["Özet_Dashboard", "Toplam Gelir", "Tüm gelir işlemlerinin net tutarı toplamı", "Otomatik"],
  ["Özet_Dashboard", "Toplam Gider", "Tüm gider işlemlerinin net tutarı toplamı", "Otomatik"],
  ["Özet_Dashboard", "Net Bakiye", "Gelir - Gider farkı: negatifse kırmızı olur", "Otomatik"],
  ["Özet_Dashboard", "Tasarruf Oranı", "Net Bakiye / Toplam Gelir yüzdesi", "Otomatik"],
  ["Kategoriler_Ayarlar", "Planlanan Bütçe", "Her kategori için aylık hedef tutarı girin", "Düzenlenebilir"],
  ["Kategoriler_Ayarlar", "Gerçekleşen Tutar", "Bütçe_Girişi'nden otomatik çekilen tutar", "Otomatik"],
  ["Kategoriler_Ayarlar", "Aşım Durumu", "'Aşıldı' ise kırmızı, 'Uygun' ise yeşil gösterir", "Otomatik"],
  ["Genel", "Para Birimi", "Tüm tutarlar Türk Lirası (₺) cinsinden", "TRY"],
  ["Genel", "KDV Hesabı", "Sadece Gider işlemlerinde KDV hesaplanır", "Önemli"],
  ["Genel", "Veri Girişi", "Sarı hücrelere veri girilebilir", "Açık sarı"],
  ["Genel", "Güncelleme", "Yeni satır ekleyerek tabloyu genişletebilirsiniz", "Her ay"]
];

const mark = text => text.split(" ")
  .map(w => known.test(w) ? w : `<span class="miss">${w}</span>`).join(" ");
const cell = text => {
  const plain = ["Durum", "TRY", "SAYFA", "AÇIKLAMA"].includes(text) ? " plain" : "";
  return `<td class="used${plain}">${mark(text)}</td>`;
};
const blank = n => "<td></td>".repeat(n);

document.getElementById("heads").innerHTML = "<tr><th></th>" +
  letters.map((l, i) => `<th scope="col"${i < 4 ? ' class="sel"' : ""}>${l}</th>`).join("") + "<th></th></tr>";

let html = `<tr class="title"><th scope="row" class="sel">1</th><td class="used" colspan="4">${mark("KULLANIM KILAVUZU")}</td>${blank(14)}</tr>`;
html += `<tr class="caption"><th scope="row">2</th>${["SAYFA", "ALAN", "AÇIKLAMA", "NOT"].map(cell).join("")}${blank(14)}</tr>`;
data.forEach((r, i) => {
  html += `<tr class="data"><th scope="row">${i + 3}</th>${r.map(cell).join("")}${blank(14)}</tr>`;
});
for (let n = 24; n <= 36; n++) html += `<tr><th scope="row">${n}</th>${blank(18)}</tr>`;
document.getElementById("rows").innerHTML = html;
```
